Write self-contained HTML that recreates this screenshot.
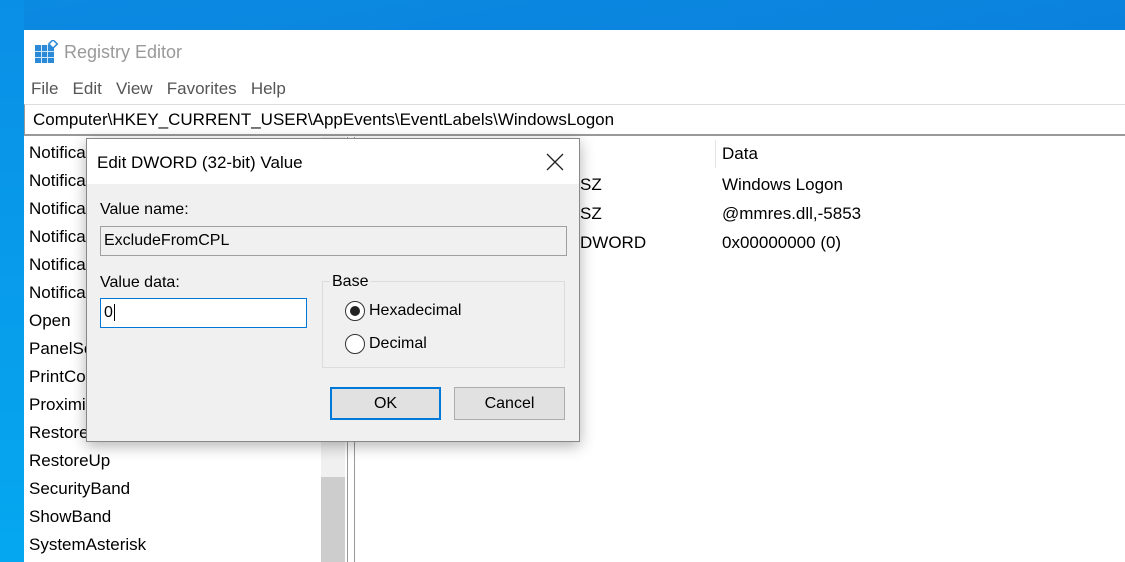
<!DOCTYPE html>
<html><head><style>
*{margin:0;padding:0;box-sizing:border-box}
body{width:1125px;height:562px;overflow:hidden;background:linear-gradient(170deg,#0b8ae2,#0a7ad8 60%,#0b84de);font-family:"Liberation Sans",sans-serif;color:#000;position:relative}
.a{position:absolute}
.t{font-size:17px;white-space:nowrap}
</style></head><body>
<div class="a" style="left:0;top:0;width:24px;height:562px;background:linear-gradient(#0a8fe6,#05a8f0)"></div>
<div class="a" style="left:24px;top:30px;width:1101px;height:532px;background:#fff"></div>
<svg class="a" style="left:35px;top:40px" width="24" height="24" viewBox="0 0 24 24">
<rect x="0" y="5" width="19" height="18" fill="#2a8ad8"/>
<g stroke="#cfe6f8" stroke-width="1"><line x1="6.5" y1="5" x2="6.5" y2="23"/><line x1="12.5" y1="5" x2="12.5" y2="23"/><line x1="0" y1="11.5" x2="19" y2="11.5"/><line x1="0" y1="17.5" x2="19" y2="17.5"/></g>
<rect x="15" y="1" width="6" height="6" transform="rotate(45 18 4)" fill="#fff" stroke="#2a8ad8" stroke-width="1.5"/>
</svg>
<div class="a t" style="left:64px;top:42px;font-size:18px;color:#999">Registry Editor</div>
<div class="a t" style="left:31px;top:79px;color:#555">File&nbsp;&nbsp; Edit&nbsp;&nbsp; View&nbsp;&nbsp; Favorites&nbsp;&nbsp; Help</div>
<div class="a" style="left:24px;top:104px;width:1101px;height:32px;border-top:1px solid #ddd;border-bottom:2px solid #999;border-left:1px solid #999"></div>
<div class="a t" style="left:33px;top:110px">Computer\HKEY_CURRENT_USER\AppEvents\EventLabels\WindowsLogon</div>
<div class="a t" style="left:29px;top:139px;line-height:28px">Notifica<br>Notifica<br>Notifica<br>Notifica<br>Notifica<br>Notifica<br>Open<br>PanelSc<br>PrintCo<br>Proximi<br>Restore<br>RestoreUp<br>SecurityBand<br>ShowBand<br>SystemAsterisk</div>
<div class="a" style="left:321px;top:137px;width:24px;height:425px;background:#f0f0f0"></div>
<div class="a" style="left:321px;top:477px;width:24px;height:85px;background:#cdcdcd"></div>
<div class="a" style="left:347px;top:137px;width:1px;height:425px;background:#999"></div>
<div class="a" style="left:354px;top:137px;width:1px;height:425px;background:#999"></div>
<div class="a" style="left:715px;top:140px;width:1px;height:28px;background:#e5e5e5"></div>
<div class="a t" style="left:722px;top:144px">Data</div>
<div class="a t" style="left:580px;top:170px;line-height:29px">SZ<br>SZ<br>DWORD</div>
<div class="a t" style="left:722px;top:170px;line-height:29px">Windows Logon<br>@mmres.dll,-5853<br>0x00000000 (0)</div>
<div class="a" style="left:86px;top:138px;width:494px;height:304px;background:#f0f0f0;border:1px solid #888;box-shadow:0 4px 14px rgba(0,0,0,.3)">
 <div class="a" style="left:0;top:0;width:492px;height:45px;background:#fff"></div>
 <div class="a t" style="left:10px;top:14px">Edit DWORD (32-bit) Value</div>
 <svg class="a" style="left:459px;top:14px" width="18" height="18"><path d="M1 1L17 17M17 1L1 17" stroke="#222" stroke-width="1.3"/></svg>
 <div class="a t" style="left:13px;top:62px;font-size:16px">Value name:</div>
 <div class="a" style="left:13px;top:87px;width:467px;height:30px;border:1px solid #a0a0a0;background:#f0f0f0"></div>
 <div class="a t" style="left:17px;top:93px;font-size:16px">ExcludeFromCPL</div>
 <div class="a t" style="left:13px;top:135px;font-size:16px">Value data:</div>
 <div class="a" style="left:13px;top:159px;width:207px;height:30px;border:1px solid #0078d7;background:#fff"></div>
 <div class="a t" style="left:17px;top:165px;font-size:16px">0<span style="border-left:1px solid #000;margin-left:1px"></span></div>
 <div class="a" style="left:235px;top:142px;width:243px;height:87px;border:1px solid #dcdcdc"></div>
 <div class="a t" style="left:243px;top:134px;font-size:16px;background:#f0f0f0;padding:0 2px">Base</div>
 <div class="a" style="left:258px;top:162px;width:20px;height:20px;border:1px solid #333;border-radius:50%;background:#fff"></div>
 <div class="a" style="left:263px;top:167px;width:10px;height:10px;border-radius:50%;background:#222"></div>
 <div class="a t" style="left:282px;top:163px;font-size:16px">Hexadecimal</div>
 <div class="a" style="left:258px;top:195px;width:20px;height:20px;border:1px solid #333;border-radius:50%;background:#fff"></div>
 <div class="a t" style="left:282px;top:196px;font-size:16px">Decimal</div>
 <div class="a" style="left:243px;top:248px;width:111px;height:33px;border:2px solid #0078d7;background:#e1e1e1;text-align:center;font-size:16px;line-height:29px">OK</div>
 <div class="a" style="left:367px;top:248px;width:111px;height:33px;border:1px solid #adadad;background:#e1e1e1;text-align:center;font-size:16px;line-height:31px">Cancel</div>
</div>
</body></html>
